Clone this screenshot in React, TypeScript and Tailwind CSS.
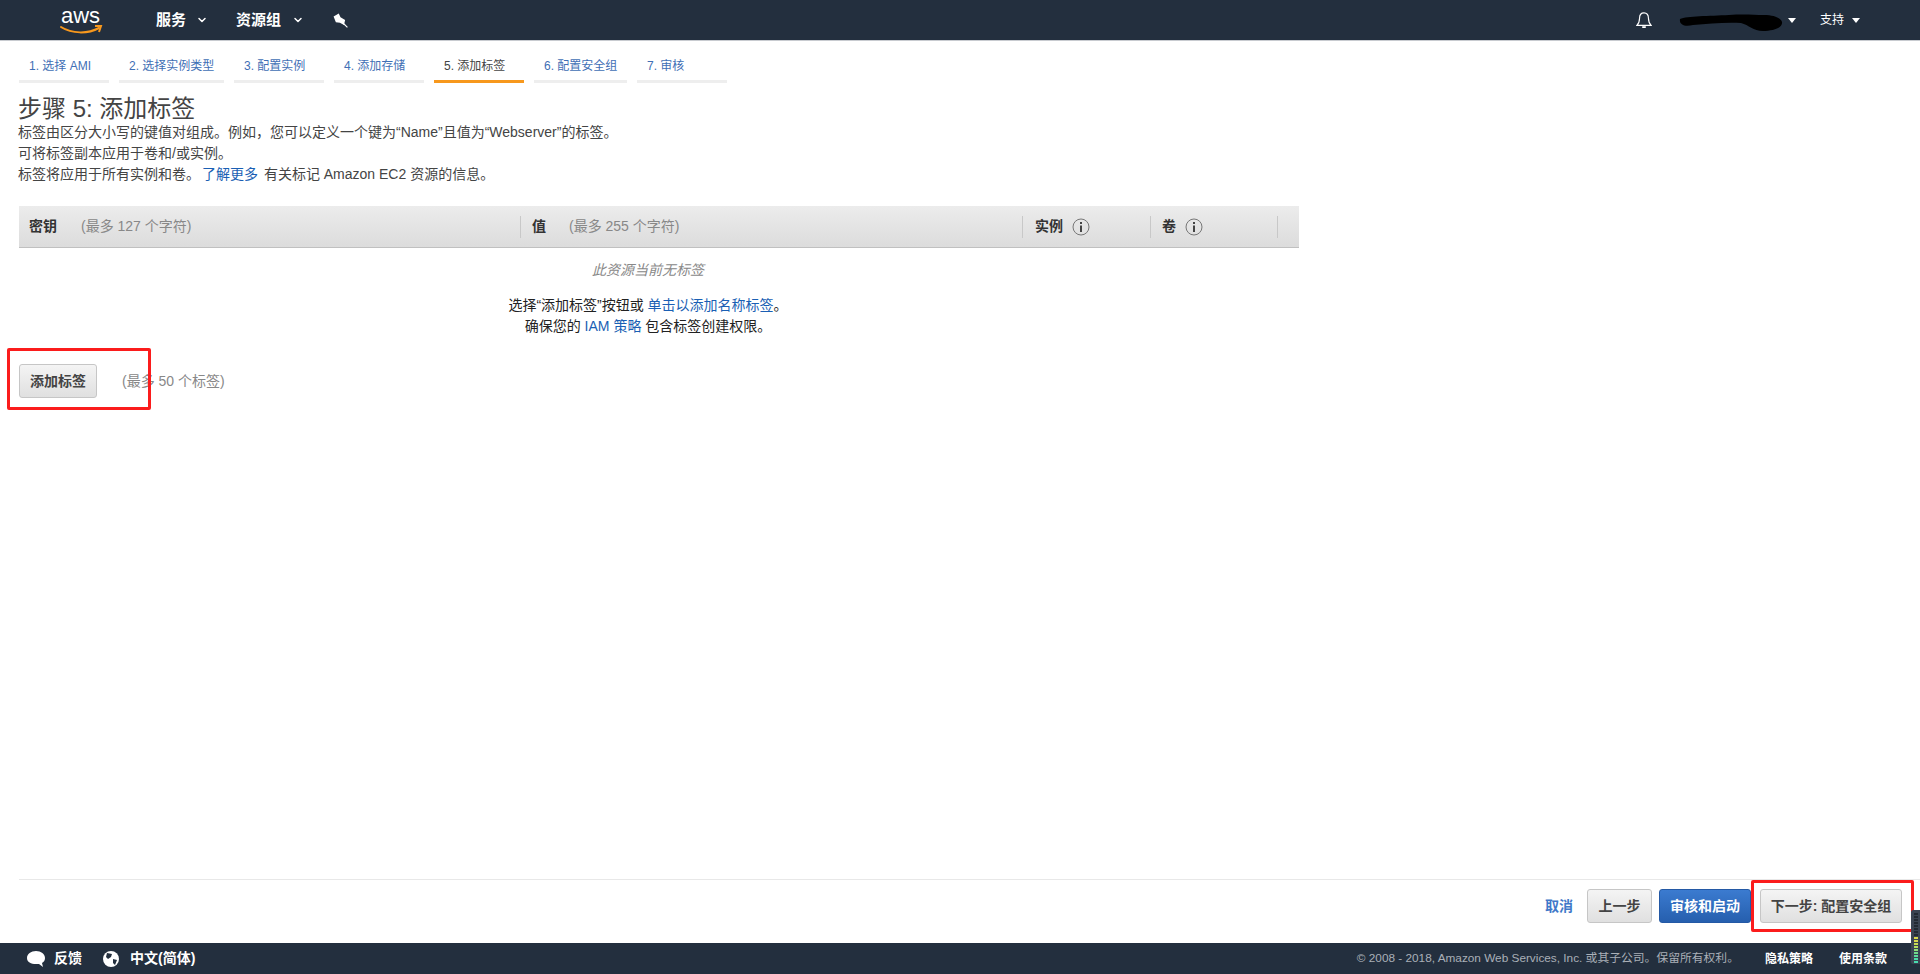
import { ChevronDown } from "lucide-react";

const font = "font-['Liberation_Sans','Noto_Sans_CJK_SC',sans-serif]";

const steps = [
  { label: "1. 选择 AMI", width: "w-[90px]" },
  { label: "2. 选择实例类型", width: "w-[105px]" },
  { label: "3. 配置实例", width: "w-[90px]" },
  { label: "4. 添加存储", width: "w-[90px]" },
  { label: "5. 添加标签", width: "w-[90px]", active: true },
  { label: "6. 配置安全组", width: "w-[93px]" },
  { label: "7. 审核", width: "w-[90px]" },
];

// colours of the little level meter at the bottom right, top to bottom
const meter = [
  "#232a33", "#232a33", "#232a33", "#232a33", "#232a33", "#232a33",
  "#232a33", "#232a33", "#d8d84a", "#d8d84a", "#c8dc55", "#b4e060",
  "#8fe07a", "#6fdc8c", "#5cdc9c", "#4fdca8", "#48dcb0",
];

const Caret = ({ className = "" }: { className?: string }) => (
  <svg viewBox="0 0 10 6" className={"h-[5px] w-[8px] fill-white " + className}>
    <path d="M0 0h10L5 6z" />
  </svg>
);

const Info = () => (
  <svg viewBox="0 0 18 18" className="h-[18px] w-[18px]">
    <circle cx="9" cy="9" r="8" fill="none" stroke="#777" strokeWidth="1" />
    <rect x="8" y="7.5" width="2" height="6.5" fill="#444" />
    <rect x="8" y="4" width="2" height="2" fill="#444" />
  </svg>
);

const AwsLogo = () => (
  <svg viewBox="0 0 44 34" className="h-[34px] w-[44px]">
    <text x="1" y="20" fontSize="22" fill="#fff" fontFamily="Liberation Sans, sans-serif">
      aws
    </text>
    <path d="M1 24c11 7 27 7 38 1" fill="none" stroke="#f7981d" strokeWidth="2" strokeLinecap="round" />
    <path d="M35 23l6 0-2 6" fill="none" stroke="#f7981d" strokeWidth="2" />
  </svg>
);

const Nav = () => (
  <div className="flex h-[41px] shrink-0 items-center border-b border-[#c8cbd0] bg-[#232f3e] text-white">
    <div className="ml-[60px]">
      <AwsLogo />
    </div>
    <div className="ml-[52px] flex items-center gap-[10px] text-[15px] font-bold">
      服务
      <ChevronDown size={12} strokeWidth={3} />
    </div>
    <div className="ml-[28px] flex items-center gap-[11px] text-[15px] font-bold">
      资源组
      <ChevronDown size={12} strokeWidth={3} />
    </div>
    <svg viewBox="0 0 13 13" className="ml-[29px] h-[15px] w-[15px]">
      <path d="M.5 3L5 .5L6.5 3.7L10.5 6L9.5 10.5L6 8.5L2.5 8Z" fill="#fff" />
      <path d="M8 8L12.5 12.5" stroke="#fff" strokeWidth="1" />
    </svg>
    <div className="ml-auto flex items-center">
      <svg viewBox="0 0 18 20" className="h-[18px] w-[16px] fill-none stroke-white stroke-[1.3]">
        <path d="M9 2c-3 0-5 2-5 6 0 4-1 6-3 8h16c-2-2-3-4-3-8 0-4-2-6-5-6z" />
        <path d="M7 18h4" strokeWidth="2" />
      </svg>
      <svg viewBox="0 0 107 18" className="ml-[27px] mt-[6px] h-[18px] w-[107px]">
        <path d="M1 5C8 2 30 2 50 1C65 0 75 1 85 1C95 1 102 4 103 8C104 14 94 17 84 17C74 17 70 11 62 9C45 8 30 10 14 11C6 13 0 11 1 5Z" fill="#000" />
      </svg>
      <Caret className="ml-[2px]" />
      <span className="ml-[24px] text-[12px]">支持</span>
      <Caret className="ml-[8px] mr-[60px]" />
    </div>
  </div>
);

const Steps = () => (
  <div className="ml-[19px] mt-[14px] flex gap-[10px] text-[12px]">
    {steps.map((step) => (
      <div
        key={step.label}
        className={
          step.width +
          " flex h-[28px] items-start border-b-[3px] pl-[10px] pt-[2px] " +
          (step.active ? "border-[#f7981d] text-[#444]" : "border-[#eee] text-[#3f6fb5]")
        }
      >
        {step.label}
      </div>
    ))}
  </div>
);

const Description = () => (
  <div className="ml-[18px] mt-[12px] text-[14px] leading-[21px] text-[#444]">
    <h1 className="text-[24px] leading-[27px] text-[#444]">步骤 5: 添加标签</h1>
    <p>标签由区分大小写的键值对组成。例如，您可以定义一个键为“Name”且值为“Webserver”的标签。</p>
    <p>可将标签副本应用于卷和/或实例。</p>
    <p>
      标签将应用于所有实例和卷。<a className="ml-[2px] mr-[2px] text-[#1a5fb4]">了解更多</a> 有关标记 Amazon EC2 资源的信息。
    </p>
  </div>
);

const TagTable = () => (
  <div className="ml-[19px] mt-[21px] w-[1280px]">
    <div className="flex h-[42px] items-center border-b border-[#c0c0c0] bg-gradient-to-b from-[#ececec] to-[#dcdcdc] text-[14px]">
      <div className="flex h-[22px] w-[502px] items-center border-r border-[#c8c8c8] pl-[10px]">
        <span className="font-bold text-[#333]">密钥</span>
        <span className="ml-[24px] text-[#888]">(最多 127 个字符)</span>
      </div>
      <div className="flex h-[22px] w-[502px] items-center border-r border-[#c8c8c8] pl-[11px]">
        <span className="font-bold text-[#333]">值</span>
        <span className="ml-[23px] text-[#888]">(最多 255 个字符)</span>
      </div>
      <div className="flex h-[22px] w-[128px] items-center gap-[9px] border-r border-[#c8c8c8] pl-[12px]">
        <span className="font-bold text-[#333]">实例</span>
        <Info />
      </div>
      <div className="flex h-[22px] w-[127px] items-center gap-[9px] border-r border-[#c8c8c8] pl-[11px]">
        <span className="font-bold text-[#333]">卷</span>
        <Info />
      </div>
    </div>
    <div className="w-[1258px] text-center text-[14px] leading-[21px] text-[#222]">
      <p className="mt-[12px] italic text-[#888]">此资源当前无标签</p>
      <p className="mt-[14px]">
        选择“添加标签”按钮或 <a className="text-[#1a5fb4]">单击以添加名称标签</a>。
      </p>
      <p>
        确保您的 <a className="text-[#1a5fb4]">IAM 策略</a> 包含标签创建权限。
      </p>
    </div>
  </div>
);

const buttonClass =
  "flex h-[34px] items-center justify-center rounded-[3px] border border-[#c6c6c6] bg-gradient-to-b from-[#f4f4f4] to-[#e0e0e0] text-[14px] font-bold text-[#444]";

const AddTag = () => (
  <div className="relative ml-[19px] mt-[27px] flex items-center">
    <button className={buttonClass + " w-[78px]"}>添加标签</button>
    <span className="ml-[25px] text-[14px] text-[#888]">(最多 50 个标签)</span>
    <div className="absolute left-[-12px] top-[-16px] h-[62px] w-[144px] rounded-[2px] border-[3px] border-[#fb1c1c]" />
  </div>
);

const Actions = () => (
  <div className="ml-[19px] flex h-[64px] shrink-0 items-center justify-end border-t border-[#e8e8e8] pb-[11px] pr-[18px]">
    <a className="mr-[14px] text-[14px] font-bold text-[#3f78c9]">取消</a>
    <button className={buttonClass + " w-[65px]"}>上一步</button>
    <button className="ml-[7px] flex h-[34px] w-[92px] items-center justify-center rounded-[3px] border border-[#2459a5] bg-gradient-to-b from-[#3b7bd0] to-[#265fae] text-[14px] font-bold text-white">
      审核和启动
    </button>
    <div className="relative ml-[9px]">
      <button className={buttonClass + " w-[142px]"}>下一步: 配置安全组</button>
      <div className="absolute left-[-9px] top-[-9px] h-[52px] w-[163px] rounded-[2px] border-[3px] border-[#fb1c1c]" />
    </div>
  </div>
);

const Footer = () => (
  <div className="relative flex h-[31px] shrink-0 items-center bg-[#232f3e] text-[14px] text-white">
    <svg viewBox="0 0 18 16" className="ml-[27px] h-[16px] w-[18px] fill-white">
      <path d="M9 0c5 0 9 3 9 7 0 2-1 4-3 5l1 4-4-3H9C4 13 0 11 0 7s4-7 9-7z" />
    </svg>
    <span className="ml-[9px] font-bold">反馈</span>
    <svg viewBox="0 0 16 16" className="ml-[21px] h-[16px] w-[16px]">
      <circle cx="8" cy="8" r="8" fill="#fff" />
      <path d="M4 2l5 1-1 3-3 2-2-2zM10 8l4 1-2 5-2-2z" fill="#232f3e" />
    </svg>
    <span className="ml-[11px] font-bold">中文(简体)</span>
    <span className="ml-auto text-[11.8px] text-[#aab0b8]">© 2008 - 2018, Amazon Web Services, Inc. 或其子公司。保留所有权利。</span>
    <span className="ml-[26px] text-[12px] font-bold">隐私策略</span>
    <span className="ml-[26px] mr-[33px] text-[12px] font-bold">使用条款</span>
    <div className="absolute bottom-[10px] right-0 flex h-[54px] w-[9px] flex-col gap-[1px] rounded-l-[2px] bg-[#3b4452] pl-[3px] pt-[3px]">
      {meter.map((color, i) => (
        <div key={i} className="h-[2px] w-[4px]" style={{ backgroundColor: color }} />
      ))}
    </div>
  </div>
);

export default function App() {
  return (
    <div className={font + " flex h-screen flex-col overflow-hidden bg-white"}>
      <Nav />
      <div className="flex flex-1 flex-col">
        <Steps />
        <Description />
        <TagTable />
        <AddTag />
      </div>
      <Actions />
      <Footer />
    </div>
  );
}
